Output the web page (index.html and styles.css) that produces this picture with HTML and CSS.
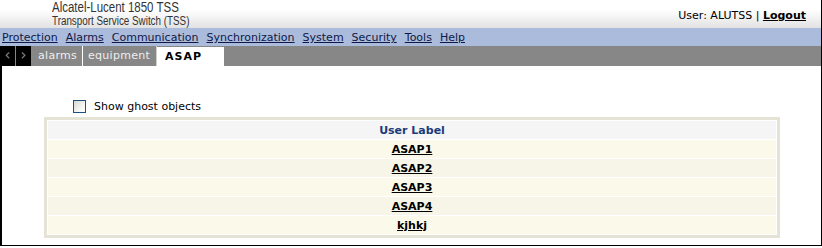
FILE: index.html
```html
<!DOCTYPE html>
<html>
<head>
  <meta charset="UTF-8">
  <title>Alcatel-Lucent 1850 TSS</title>
  <link rel="stylesheet" href="styles.css">
</head>
<body>

  <div class="page">
    <div class="header">
      <div class="brand">
        <div class="brand-name">Alcatel-Lucent 1850 TSS</div>
        <div class="brand-sub">Transport Service Switch (TSS)</div>
      </div>
      <div class="user">User: ALUTSS | <a href="#">Logout</a></div>
    </div>

    <div class="menu">
      <a href="#">Protection</a>
      <a href="#">Alarms</a>
      <a href="#">Communication</a>
      <a href="#">Synchronization</a>
      <a href="#">System</a>
      <a href="#">Security</a>
      <a href="#">Tools</a>
      <a href="#">Help</a>
    </div>

    <div class="tabs">
      <span class="tab-btn">&lsaquo;</span>
      <span class="tab-btn">&rsaquo;</span>
      <span class="tab tab-alarms">alarms</span>
      <span class="tab tab-equipment">equipment</span>
      <span class="tab tab-active">ASAP</span>
    </div>

    <div class="content">
      <label class="ghost">
        <span class="check"></span>
        Show ghost objects
      </label>

      <table class="labels">
        <tr><th>User Label</th></tr>
        <tr class="odd"><td><a href="#">ASAP1</a></td></tr>
        <tr class="even"><td><a href="#">ASAP2</a></td></tr>
        <tr class="odd"><td><a href="#">ASAP3</a></td></tr>
        <tr class="even"><td><a href="#">ASAP4</a></td></tr>
        <tr class="odd"><td><a href="#">kjhkj</a></td></tr>
      </table>
    </div>
  </div>

</body>
</html>
```

FILE: styles.css
```css
body {
  margin: 0;
  padding: 0;
  background-color: #FFFFFF;
  color: #000000;
  font-family: "DejaVu Sans", Verdana, sans-serif;
  font-size: 11px;
}
.page {
  width: 821px;
  border-right: 1px solid #000000;
}
/* Header with product name */
.header {
  height: 28px;
  display: flex;
  justify-content: space-between;
  align-items: center;
  background: linear-gradient(#FFFFFF 0%, #FFFFFF 35%, #E2E2E2 100%);
}
.brand {
  margin-left: 52px;
  color: #333333;
  font-family: "Liberation Sans", Arial, sans-serif;
  transform: scaleX(0.82);
  transform-origin: left center;
}
.brand-name {
  font-size: 14px;
  line-height: 14px;
}
.brand-sub {
  font-size: 12px;
  line-height: 14px;
}
.user {
  padding-right: 15px;
  padding-top: 2px;
  color: #000000;
}
.user a {
  color: #000000;
  font-weight: bold;
}
/* Menu bar */
.menu {
  height: 18px;
  display: flex;
  align-items: center;
  gap: 8px;
  padding-left: 2px;
  padding-top: 1px;
  box-sizing: border-box;
  background-color: #AABBDB;
}
.menu a {
  color: #101848;
  text-decoration: underline;
}
/* Tab bar */
.tabs {
  height: 20px;
  display: flex;
  background-color: #878787;
}
.tab-btn {
  width: 15px;
  margin-right: 1px;
  background-color: #000000;
  color: #8A8A8A;
  font-size: 15px;
  line-height: 19px;
  text-align: center;
}
.tab {
  box-sizing: border-box;
  line-height: 20px;
  color: #EEEEEE;
  letter-spacing: 0.3px;
}
.tab-alarms {
  width: 50px;
  margin-left: 1px;
  padding-left: 5px;
  border-right: 1px solid #FFFFFF;
}
.tab-equipment {
  width: 74px;
  padding-left: 5px;
  border-right: 1px solid #D0D0D0;
}
.tab-active {
  width: 67px;
  margin-top: 1px;
  padding-left: 8px;
  line-height: 19px;
  background-color: #FFFFFF;
  color: #000000;
  font-weight: bold;
  letter-spacing: 1px;
}
/* Main area */
.content {
  height: 180px;
  box-sizing: border-box;
  padding: 34px 0 0 42px;
  border-left: 2px solid #000000;
  border-bottom: 1px solid #000000;
}
.ghost {
  display: flex;
  align-items: center;
  gap: 8px;
  margin-left: 29px;
  height: 13px;
}
.check {
  width: 11px;
  height: 11px;
  border: 1px solid #1C5180;
  background: linear-gradient(135deg, #D8D8D2 0%, #F4F4F0 60%, #FFFFFF 100%);
}
.labels {
  width: 736px;
  margin-top: 4px;
  border: 3px solid #E5E2D6;
  border-spacing: 1px;
  background-color: #FFFFFF;
}
.labels th,
.labels td {
  height: 18px;
  padding: 0;
  text-align: center;
  font-weight: bold;
}
.labels th {
  background-color: #F5F5F5;
  color: #1A3A7A;
}
.labels tr.odd td {
  background-color: #FBFAEA;
}
.labels tr.even td {
  background-color: #F7F5E7;
}
.labels a {
  color: #000000;
  text-decoration: underline;
}
```
